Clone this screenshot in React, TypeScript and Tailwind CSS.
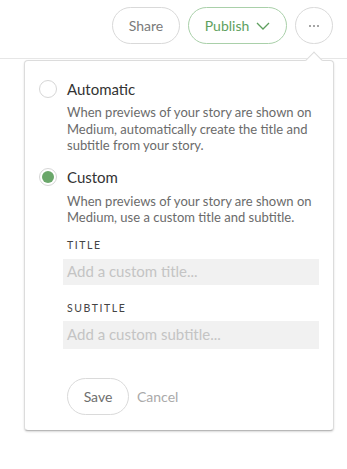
const font = { fontFamily: 'Lato, "Liberation Sans", sans-serif' };

function Radio({ checked }: { checked: boolean }) {
  return (
    <span className="w-[18px] h-[18px] rounded-full border border-[#d6d6d6] bg-white flex items-center justify-center shrink-0">
      {checked && <span className="w-[12px] h-[12px] rounded-full bg-[#6aa76a]" />}
    </span>
  );
}

export default function App() {
  return (
    <div className="relative w-[347px] h-[469px] bg-white overflow-hidden" style={font}>
      {/* Barra superior */}
      <div className="h-[59px] border-b border-[#e6e6e6] flex items-start justify-end gap-2 pr-[14px] pt-[7px]">
        <button className="h-[37px] w-[68px] rounded-full border border-[#d9d9d9] text-[14px] text-[#7a7a7a]">Share</button>
        <button className="h-[37px] w-[99px] rounded-full border border-[#a9d0a9] text-[14px] text-[#5e9f5e] flex items-center justify-center gap-[7px]">
          Publish
          <svg aria-hidden="true" className="w-[14px] h-[8px]" viewBox="0 0 14 8" fill="none" stroke="currentColor" strokeWidth={1.3}>
            <path d="M1 1l6 6 6-6" />
          </svg>
        </button>
        <button className="h-[37px] w-[38px] rounded-full border border-[#d9d9d9] flex items-center justify-center gap-[2px]">
          <span className="w-[2px] h-[2px] rounded-full bg-[#888]" />
          <span className="w-[2px] h-[2px] rounded-full bg-[#888]" />
          <span className="w-[2px] h-[2px] rounded-full bg-[#888]" />
        </button>
      </div>

      {/* Popover */}
      <div className="absolute left-[24px] top-[60px] w-[310px] h-[371px] bg-white border border-[#dcdcdc] border-b-[#b8b8b8] rounded-[4px] shadow-[0_1px_2px_rgba(0,0,0,0.15)]">
        <div className="absolute top-[-7px] left-[283px] w-[12px] h-[12px] rotate-45 bg-white border-l border-t border-[#dcdcdc]" />
        <div className="relative pl-[14px] pr-[14px] pt-[19px]">
          <div className="flex items-center gap-[10px]">
            <Radio checked={false} />
            <span className="text-[15px] text-[#333] leading-[18px]">Automatic</span>
          </div>
          <p className="pl-[28px] mt-[6px] text-[13px] leading-[16.5px] text-[#6b6b6b]">
            When previews of your story are shown on Medium, automatically create the title and subtitle from your story.
          </p>

          <div className="flex items-center gap-[10px] mt-[14px]">
            <Radio checked />
            <span className="text-[15px] text-[#333] leading-[18px]">Custom</span>
          </div>
          <p className="pl-[28px] mt-[7px] text-[13px] leading-[16px] text-[#6b6b6b]">
            When previews of your story are shown on Medium, use a custom title and subtitle.
          </p>

          <div className="pl-[24px]">
            <div className="pl-[4px] mt-[13px] text-[10.5px] tracking-[0.15em] text-[#444] leading-[14px]">TITLE</div>
            <div className="mt-[7px] h-[26px] bg-[#f1f1f1] flex items-center px-[4px] text-[15px] text-[#c4c4c4]">Add a custom title...</div>
            <div className="pl-[4px] mt-[16px] text-[10.5px] tracking-[0.15em] text-[#444] leading-[14px]">SUBTITLE</div>
            <div className="mt-[6px] h-[28px] bg-[#f1f1f1] flex items-center px-[4px] text-[15px] text-[#c4c4c4]">Add a custom subtitle...</div>

            <div className="flex items-center gap-[8px] mt-[29px] pl-[4px]">
              <button className="h-[37px] w-[62px] rounded-full border border-[#dadada] text-[14px] text-[#6e6e6e]">Save</button>
              <span className="text-[14px] text-[#aaa]">Cancel</span>
            </div>
          </div>
        </div>
      </div>
    </div>
  );
}
